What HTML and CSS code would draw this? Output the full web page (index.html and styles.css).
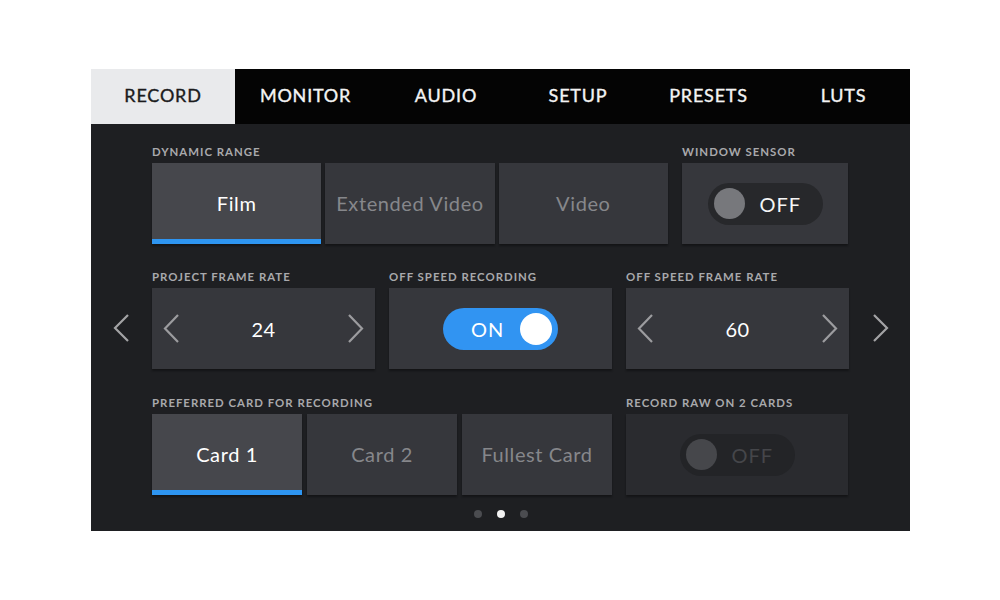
FILE: index.html
```html
<!DOCTYPE html>
<html>
<head>
<meta charset="utf-8">
<link rel="stylesheet" href="styles.css">
</head>
<body>
<div class="screen">
  <div class="tabs">
    <div class="tab tab-record active">RECORD</div>
    <div class="tab tab-monitor">MONITOR</div>
    <div class="tab tab-audio">AUDIO</div>
    <div class="tab tab-setup">SETUP</div>
    <div class="tab tab-presets">PRESETS</div>
    <div class="tab tab-luts">LUTS</div>
  </div>
  <div class="body">
    <div class="row row1">
      <div class="group g-dynamic">
        <div class="label">DYNAMIC RANGE</div>
        <div class="seg">
          <div class="btn selected">Film</div>
          <div class="btn">Extended Video</div>
          <div class="btn">Video</div>
        </div>
      </div>
      <div class="group g-window">
        <div class="label">WINDOW SENSOR</div>
        <div class="box">
          <div class="pill off"><span class="knob"></span><span class="pill-text">OFF</span></div>
        </div>
      </div>
    </div>

    <div class="nav nav-left">
      <svg width="16" height="28" viewBox="0 0 16 28"><polyline points="15,1 2,14 15,27" fill="none" stroke="#a3a3a5" stroke-width="2.2"/></svg>
    </div>
    <div class="row row2">
      <div class="group">
        <div class="label">PROJECT FRAME RATE</div>
        <div class="box stepper">
          <svg width="16" height="29" viewBox="0 0 16 29"><polyline points="15,1 2,14.5 15,28" fill="none" stroke="#9c9c9f" stroke-width="2.2"/></svg>
          <span class="value">24</span>
          <svg width="16" height="29" viewBox="0 0 16 29"><polyline points="1,1 14,14.5 1,28" fill="none" stroke="#9c9c9f" stroke-width="2.2"/></svg>
        </div>
      </div>
      <div class="group">
        <div class="label">OFF SPEED RECORDING</div>
        <div class="box">
          <div class="pill on"><span class="pill-text">ON</span><span class="knob"></span></div>
        </div>
      </div>
      <div class="group">
        <div class="label">OFF SPEED FRAME RATE</div>
        <div class="box stepper">
          <svg width="16" height="29" viewBox="0 0 16 29"><polyline points="15,1 2,14.5 15,28" fill="none" stroke="#9c9c9f" stroke-width="2.2"/></svg>
          <span class="value">60</span>
          <svg width="16" height="29" viewBox="0 0 16 29"><polyline points="1,1 14,14.5 1,28" fill="none" stroke="#9c9c9f" stroke-width="2.2"/></svg>
        </div>
      </div>
    </div>
    <div class="nav nav-right">
      <svg width="16" height="28" viewBox="0 0 16 28"><polyline points="1,1 14,14 1,27" fill="none" stroke="#a3a3a5" stroke-width="2.2"/></svg>
    </div>

    <div class="row row3">
      <div class="group g-card">
        <div class="label">PREFERRED CARD FOR RECORDING</div>
        <div class="seg seg-card">
          <div class="btn selected">Card 1</div>
          <div class="btn">Card 2</div>
          <div class="btn">Fullest Card</div>
        </div>
      </div>
      <div class="group g-raw">
        <div class="label">RECORD RAW ON 2 CARDS</div>
        <div class="box disabled">
          <div class="pill dim"><span class="knob"></span><span class="pill-text">OFF</span></div>
        </div>
      </div>
    </div>

    <div class="dots">
      <span class="dot"></span>
      <span class="dot current"></span>
      <span class="dot"></span>
    </div>
  </div>
</div>
</body>
</html>
```

FILE: styles.css
```css
* { box-sizing: border-box; }
html, body {
  margin: 0;
  padding: 0;
  background: #ffffff;
}
body {
  font-family: Lato, "Open Sans", sans-serif;
  padding: 69px 0 0 91px;
}
.screen {
  width: 819px;
  height: 462px;
  display: flex;
  flex-direction: column;
  background: #1e1f22;
}
.tabs {
  display: flex;
  height: 55px;
  background: #040404;
}
.tab {
  display: flex;
  align-items: center;
  justify-content: center;
  padding-bottom: 3px;
  color: #f4f4f4;
  font-size: 18px;
  font-weight: 400;
  letter-spacing: 0.8px;
  -webkit-text-stroke: 0.35px currentColor;
}
.tab.active {
  background: #e9eaec;
  color: #1b1b1d;
}
.tab-record { width: 144px; }
.tab-monitor { width: 141px; }
.tab-audio { width: 140px; }
.tab-setup { width: 124px; }
.tab-presets { width: 137px; }
.tab-luts { width: 133px; }

.body {
  flex: 1;
  display: grid;
  grid-template-columns: 61px 697px 61px;
  grid-template-rows: auto auto auto auto;
  align-content: start;
  padding-top: 21px;
}
.row {
  grid-column: 2;
  display: flex;
  gap: 14px;
}
.row1 { grid-row: 1; }
.row2 { grid-row: 2; margin-top: 26px; }
.row3 { grid-row: 3; margin-top: 27px; }
.nav {
  grid-row: 2;
  margin-top: 26px;
  display: flex;
  align-items: flex-end;
}
.nav svg { display: block; margin-bottom: 27px; }
.nav-left { grid-column: 1; justify-content: flex-end; padding-right: 23px; }
.nav-right { grid-column: 3; justify-content: flex-start; padding-left: 24px; }

.group { display: flex; flex-direction: column; flex: 1; }
.g-dynamic { flex: 0 0 516px; }
.g-window { flex: 0 0 166px; }
.g-card { flex: 0 0 460px; }
.g-raw { flex: 0 0 222px; }

.label {
  height: 18px;
  line-height: 13px;
  font-size: 11.4px;
  font-weight: 700;
  letter-spacing: 1px;
  color: #a9a9ac;
  white-space: nowrap;
}
.seg { display: flex; gap: 4px; }
.seg-card { gap: 5px; }
.btn {
  flex: 1;
  height: 81px;
  display: flex;
  align-items: center;
  justify-content: center;
  background: #36373c;
  color: #86878b;
  font-size: 20px;
  letter-spacing: 0.6px;
  box-shadow: 0 2px 2px rgba(0,0,0,0.35);
  padding-bottom: 2px;
}
.btn.selected {
  background: #46474c;
  color: #ffffff;
  border-bottom: 5px solid #2e95f1;
  padding-bottom: 0;
  padding-top: 3px;
}
.box {
  height: 81px;
  display: flex;
  align-items: center;
  justify-content: center;
  background: #36373c;
  box-shadow: 0 2px 2px rgba(0,0,0,0.35);
}
.box.disabled { background: #2a2b2f; }
.stepper {
  justify-content: space-between;
  padding: 0 11px;
}
.stepper svg { display: block; }
.value {
  color: #ffffff;
  font-size: 20px;
  letter-spacing: 0.5px;
}

.pill {
  width: 115px;
  height: 42px;
  border-radius: 21px;
  display: flex;
  align-items: center;
  padding: 0 6px;
  font-size: 20px;
  letter-spacing: 1px;
}
.knob {
  width: 31px;
  height: 31px;
  border-radius: 50%;
  flex: 0 0 31px;
}
.pill.off { background: #27282b; color: #f5f5f5; }
.pill.off .knob { background: #77787c; }
.pill.off .pill-text, .pill.dim .pill-text { margin-left: 15px; }
.pill.on { background: #3194f2; color: #ffffff; justify-content: space-between; padding: 0 6px 0 28px; }
.pill.on .knob { background: #ffffff; width: 32px; height: 32px; flex-basis: 32px; }
.pill.dim { background: #232427; color: #45464a; }
.pill.dim .knob { background: #46474b; }

.dots {
  grid-column: 2;
  grid-row: 4;
  display: flex;
  justify-content: center;
  gap: 15px;
  margin-top: 15px;
}
.dot {
  width: 8px;
  height: 8px;
  border-radius: 50%;
  background: #4b4c50;
}
.dot.current { background: #f2f2f2; }
```
